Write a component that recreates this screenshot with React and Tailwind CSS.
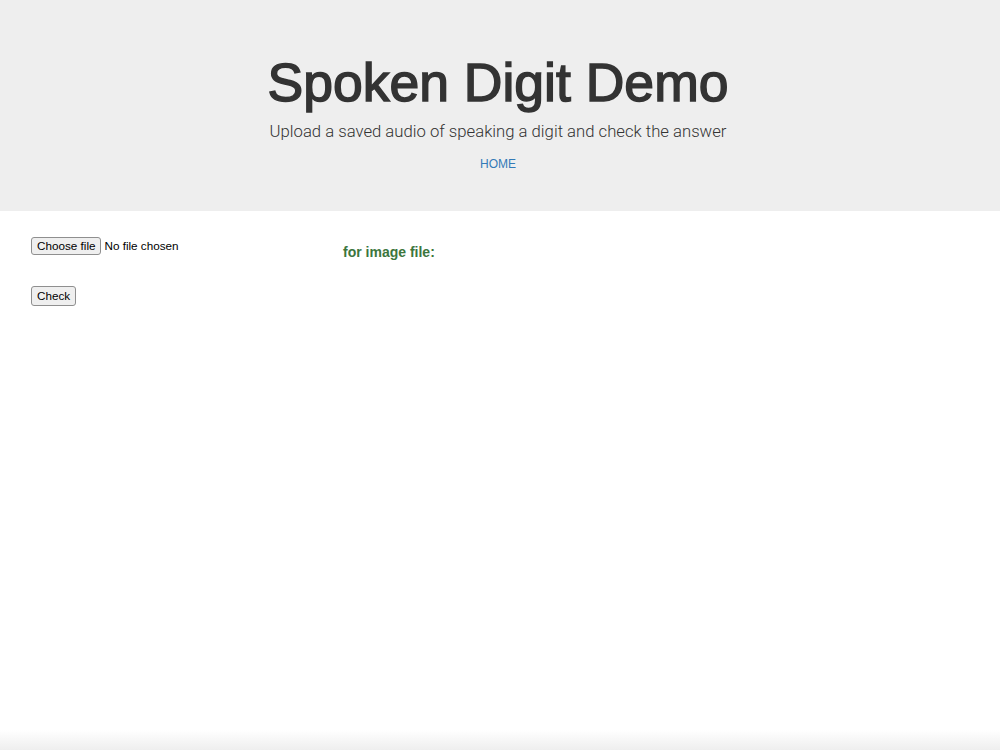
export default function App() {
  return (
    <div className="min-h-[750px] flex flex-col bg-white text-[#333333]" style={{ fontFamily: '"Liberation Sans", Arial, sans-serif' }}>
      <header className="bg-[#eeeeee] h-[211px] flex flex-col items-center pt-[52px]">
        <h1 className="text-[53.5px] leading-[62px] font-normal text-[#333333] mr-[4px] [-webkit-text-stroke:1.5px_#333333]">Spoken Digit Demo</h1>
        <p className="text-[16.7px] leading-[24px] text-[#333333] mt-[6px] mr-[4px]" style={{ fontFamily: 'Roboto, "Liberation Sans", sans-serif', fontWeight: 300 }}>Upload a saved audio of speaking a digit and check the answer</p>
        <a className="text-[12px] leading-[16px] text-[#337ab7] mt-[12px] mr-[4px]">HOME</a>
      </header>
      <main className="flex-1 flex pl-[31px]">
        <div className="w-[312px] pt-[26px]">
          <div className="flex items-center gap-[3px] h-[18px]">
            <button className="h-[18px] px-[5px] text-[11.7px] leading-[16px] text-black bg-[#efefef] border border-[#8f8f8f] rounded-[3px]">Choose file</button>
            <span className="text-[11.7px] text-black">No file chosen</span>
          </div>
          <button className="mt-[31px] h-[20px] px-[5px] text-[11.7px] leading-[16px] text-black bg-[#efefef] border border-[#8f8f8f] rounded-[3px]">Check</button>
        </div>
        <div className="pt-[32px]">
          <h4 className="text-[14px] leading-[18px] font-bold text-[#3c763d]">for image file:</h4>
        </div>
      </main>
      <div className="h-[20px] bg-gradient-to-b from-white to-[#eeeeee]"></div>
    </div>
  );
}
